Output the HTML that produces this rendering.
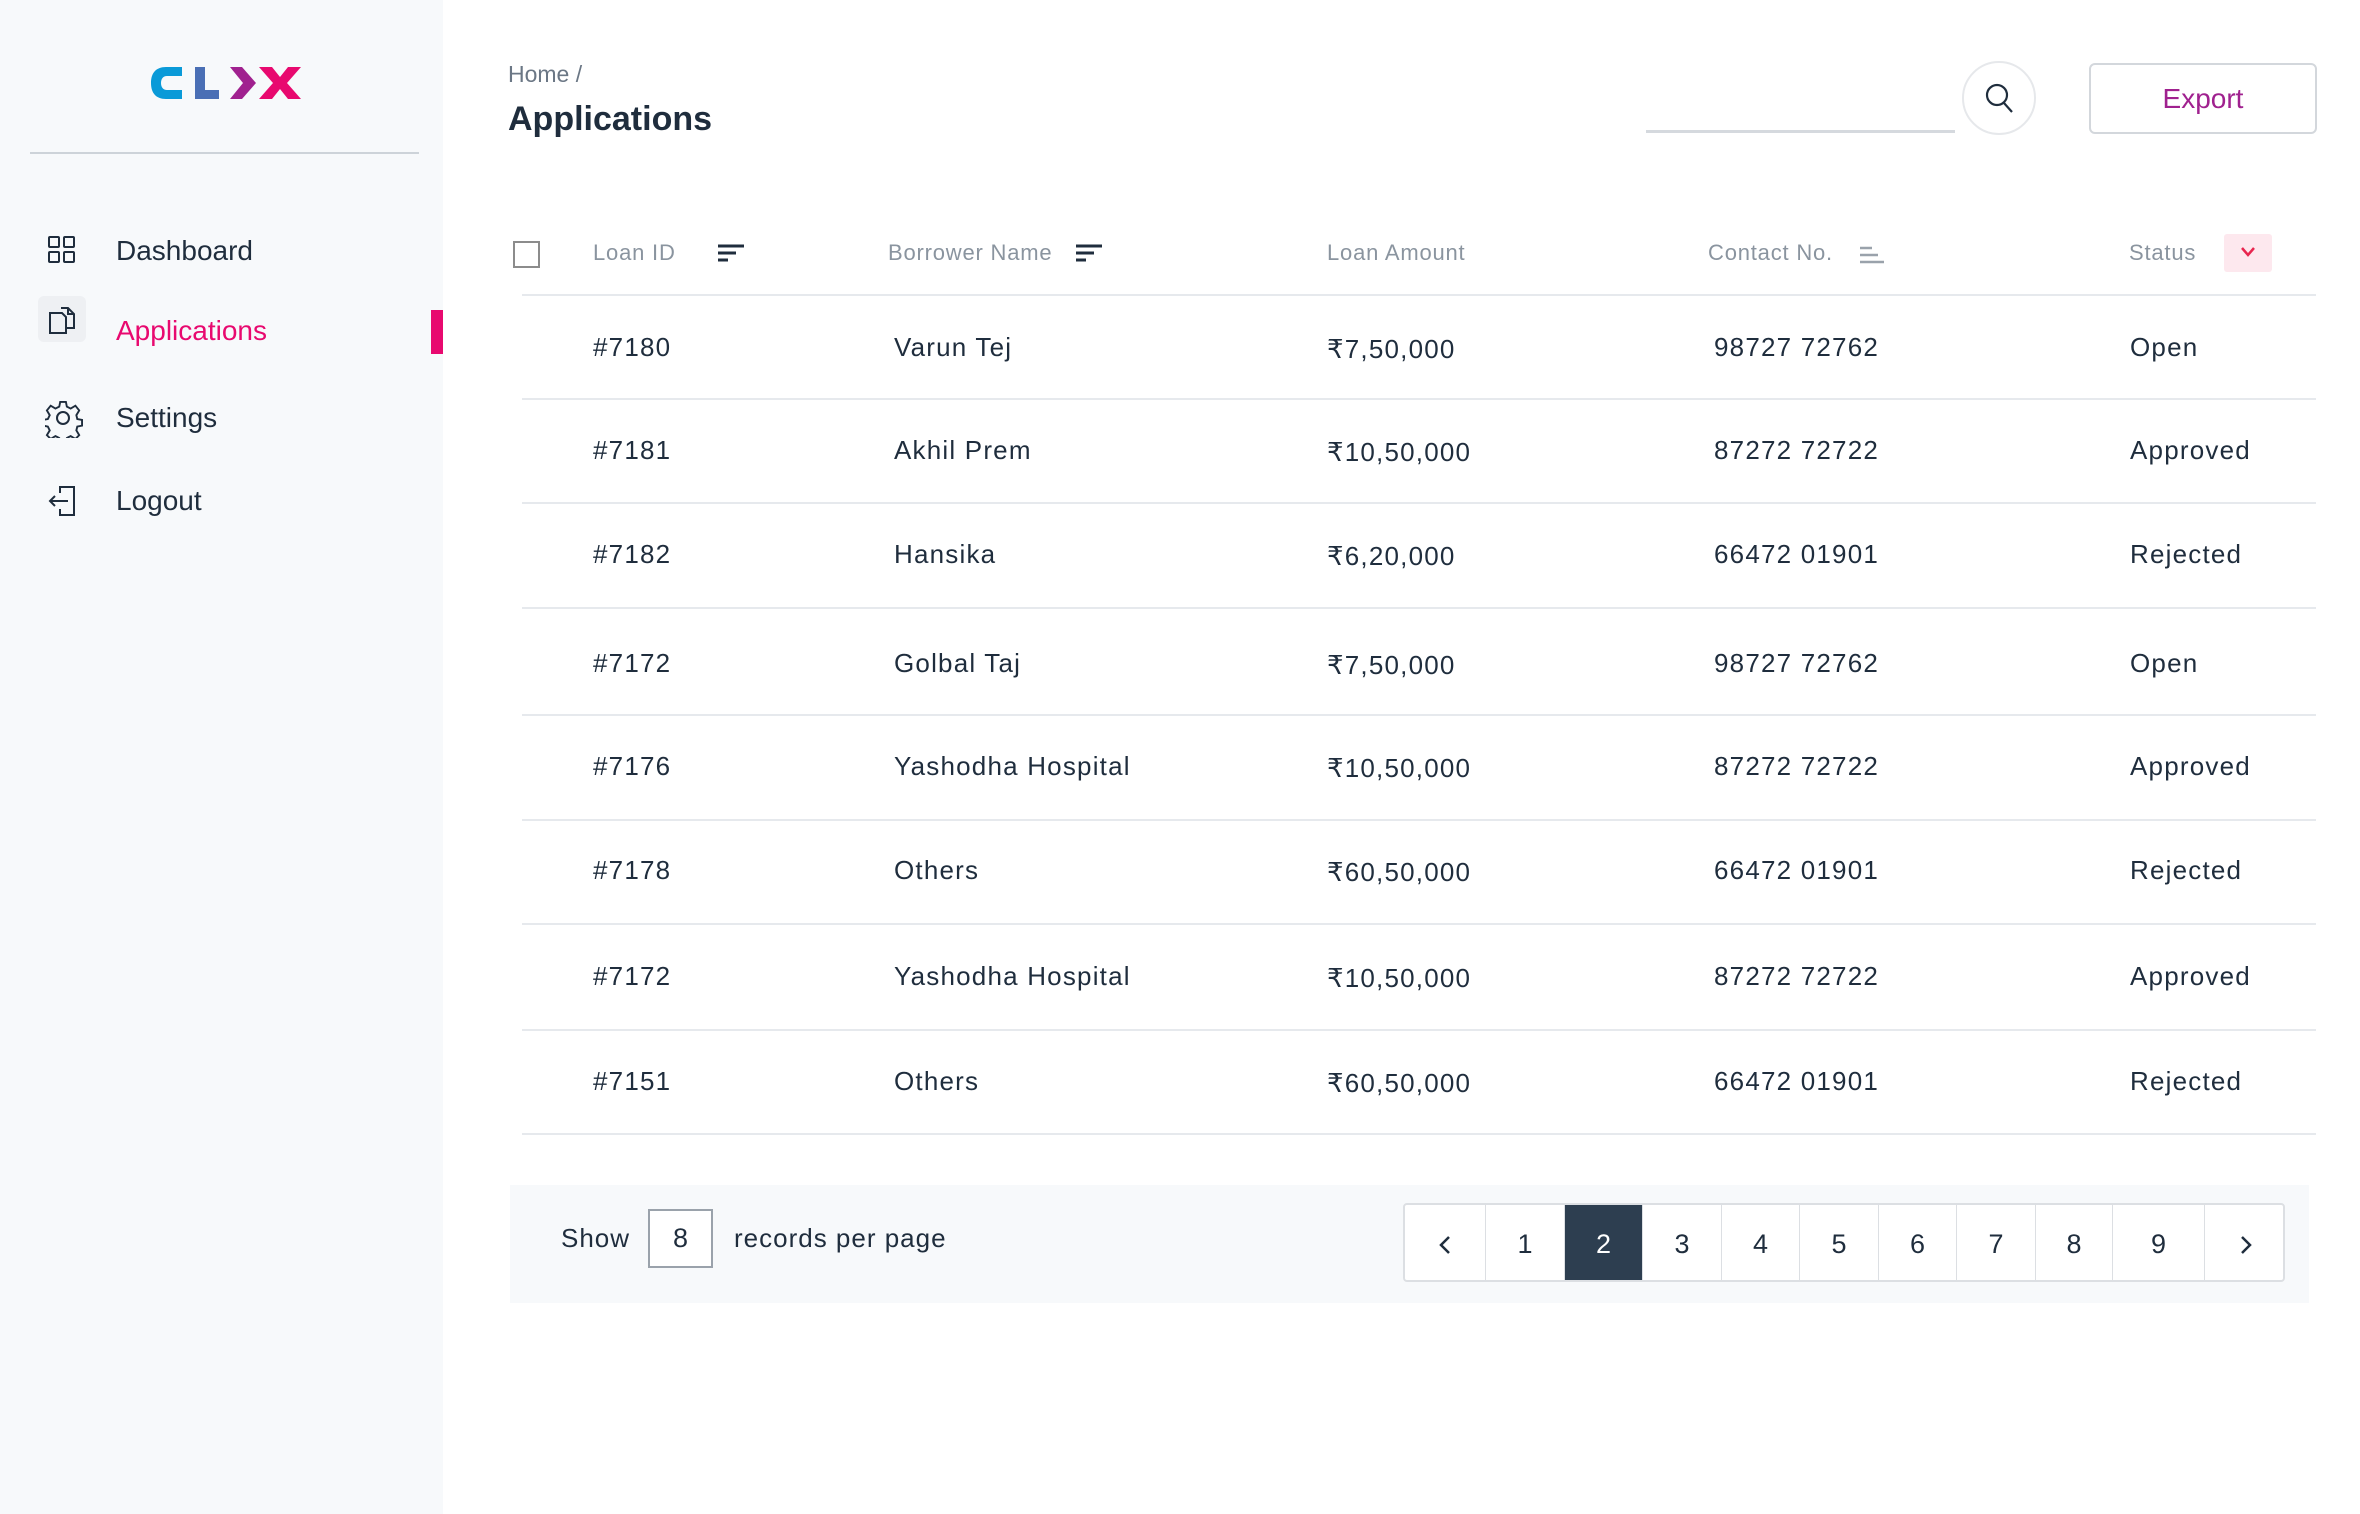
<!DOCTYPE html>
<html><head><meta charset="utf-8"><style>
*{margin:0;padding:0;box-sizing:border-box}
body{width:2360px;height:1514px;background:#fff;font-family:"Liberation Sans",sans-serif;color:#1f2d3d;position:relative;overflow:hidden}
.a{position:absolute;white-space:nowrap}
.side{position:absolute;left:0;top:0;width:443px;height:1514px;background:#f7f9fb}
.nav{font-size:28px;line-height:1}
.th{font-size:22px;color:#8a949f;letter-spacing:.8px;line-height:1}
.td{font-size:26px;letter-spacing:1.2px;line-height:1;color:#1f2d3d}
.ln{position:absolute;left:522px;width:1794px;height:2px;background:#e6e9ed}
.pg{position:absolute;top:0;height:79px;border-left:1px solid #dcdfe3;display:flex;align-items:center;justify-content:center;font-size:27px;color:#1f2d3d}
</style></head><body>
<div class="side"></div>
<svg class="a" style="left:148px;top:63px" width="156" height="40" viewBox="0 0 156 40">
<path d="M34 4H18C8 4 3 10 3 20s5 16 15 16h16V27H19c-4 0-6-3-6-7s2-7 6-7h15z" fill="#0a9ad8"/>
<path d="M47 4h10v23h14v9H47z" fill="#4a6fb5"/>
<path d="M82 4h12l14 16-14 16H82l13-16z" fill="#a0218f"/>
<path d="M111 4h13l8 10 8-10h13l-14 16 14 16h-13l-8-10-8 10h-13l14-16z" fill="#e8096f"/>
</svg>
<div class="a" style="left:30px;top:152px;width:389px;height:2px;background:#cdd3d9"></div>
<svg class="a" style="left:47px;top:235px" width="30" height="30" viewBox="0 0 30 30" fill="none" stroke="#1f2d3d" stroke-width="2"><rect x="2" y="2" width="10" height="10" rx="1"/><rect x="17" y="2" width="10" height="10" rx="1"/><rect x="2" y="17" width="10" height="10" rx="1"/><rect x="17" y="17" width="10" height="10" rx="1"/></svg>
<div class="a nav" style="left:116px;top:237px">Dashboard</div>
<div class="a" style="left:38px;top:296px;width:48px;height:46px;background:#eef0f3;border-radius:6px"></div>
<svg class="a" style="left:47px;top:305px" width="30" height="30" viewBox="0 0 30 30" fill="none" stroke="#1f2d3d" stroke-width="2"><path d="M3 8h12l4 4v16H3z"/><path d="M14 3h7l6 6v14h-8"/><path d="M21 3v6h6"/></svg>
<div class="a nav" style="left:116px;top:317px;color:#e8096f">Applications</div>
<div class="a" style="left:431px;top:310px;width:12px;height:44px;background:#e8096f"></div>
<svg class="a" style="left:45px;top:400px" width="38" height="38" viewBox="0 0 38 38" fill="none" stroke="#1f2d3d" stroke-width="2"><path d="M16 2h6l1 5 4 2 5-3 4 5-3 5 1 4 5 1v6l-5 1-1 4 3 5-4 4-5-3-4 2-1 5h-6l-1-5-4-2-5 3-4-4 3-5-2-4-5-1v-6l5-1 2-4-3-5 4-5 5 3 4-2z" transform="scale(.95)"/><circle cx="18" cy="18" r="6"/></svg>
<div class="a nav" style="left:116px;top:404px">Settings</div>
<svg class="a" style="left:47px;top:484px" width="32" height="34" viewBox="0 0 32 34" fill="none" stroke="#1f2d3d" stroke-width="2"><path d="M13 9V3h14v28H13v-6"/><path d="M21 17H3m5-5l-5 5 5 5"/></svg>
<div class="a nav" style="left:116px;top:487px">Logout</div>

<div class="a" style="left:508px;top:61px;font-size:23px;color:#6b7785">Home /</div>
<div class="a" style="left:508px;top:100px;font-size:34px;font-weight:bold;color:#1f2d3d">Applications</div>
<div class="a" style="left:1646px;top:130px;width:309px;height:3px;background:#d5d9de"></div>
<div class="a" style="left:1962px;top:61px;width:74px;height:74px;border-radius:50%;border:2px solid #e6e8eb;background:#fff"></div>
<svg class="a" style="left:1984px;top:82px" width="32" height="32" viewBox="0 0 32 32" fill="none" stroke="#1f2d3d" stroke-width="2.2"><circle cx="13" cy="13" r="10"/><path d="M20 21l8 9"/></svg>
<div class="a" style="left:2089px;top:63px;width:228px;height:71px;border:2px solid #d3d7dc;border-radius:6px;display:flex;align-items:center;justify-content:center;font-size:28px;color:#a0218f">Export</div>

<div class="a" style="left:513px;top:241px;width:27px;height:27px;border:2px solid #8c8c8c"></div>
<div class="a th" style="left:593px;top:242px">Loan ID</div>
<svg class="a" style="left:718px;top:244px" width="26" height="20"><path d="M0 2h26M0 9h18M0 16h10" stroke="#1f2d3d" stroke-width="3"/></svg>
<div class="a th" style="left:888px;top:242px">Borrower Name</div>
<svg class="a" style="left:1076px;top:244px" width="26" height="20"><path d="M0 2h26M0 9h18M0 16h10" stroke="#1f2d3d" stroke-width="3"/></svg>
<div class="a th" style="left:1327px;top:242px">Loan Amount</div>
<div class="a th" style="left:1708px;top:242px">Contact No.</div>
<svg class="a" style="left:1860px;top:246px" width="24" height="18"><path d="M0 2h12M0 9h18M0 16h24" stroke="#9aa2ab" stroke-width="2.5"/></svg>
<div class="a th" style="left:2129px;top:242px">Status</div>
<div class="a" style="left:2224px;top:234px;width:48px;height:38px;background:#fde8ee;border-radius:3px"></div>
<svg class="a" style="left:2240px;top:246px" width="16" height="12"><path d="M2 2l6 7 6-7" fill="none" stroke="#e8264f" stroke-width="2.5"/></svg>

<div class="ln" style="top:294px"></div><div class="ln" style="top:398px"></div><div class="ln" style="top:502px"></div><div class="ln" style="top:607px"></div><div class="ln" style="top:714px"></div><div class="ln" style="top:819px"></div><div class="ln" style="top:923px"></div><div class="ln" style="top:1029px"></div><div class="ln" style="top:1133px"></div>

<div class="a td" style="left:593px;top:334px">#7180</div><div class="a td" style="left:894px;top:334px">Varun Tej</div><div class="a td" style="left:1327px;top:336px">₹7,50,000</div><div class="a td" style="left:1714px;top:334px">98727 72762</div><div class="a td" style="left:2130px;top:334px">Open</div>
<div class="a td" style="left:593px;top:437px">#7181</div><div class="a td" style="left:894px;top:437px">Akhil Prem</div><div class="a td" style="left:1327px;top:439px">₹10,50,000</div><div class="a td" style="left:1714px;top:437px">87272 72722</div><div class="a td" style="left:2130px;top:437px">Approved</div>
<div class="a td" style="left:593px;top:541px">#7182</div><div class="a td" style="left:894px;top:541px">Hansika</div><div class="a td" style="left:1327px;top:543px">₹6,20,000</div><div class="a td" style="left:1714px;top:541px">66472 01901</div><div class="a td" style="left:2130px;top:541px">Rejected</div>
<div class="a td" style="left:593px;top:650px">#7172</div><div class="a td" style="left:894px;top:650px">Golbal Taj</div><div class="a td" style="left:1327px;top:652px">₹7,50,000</div><div class="a td" style="left:1714px;top:650px">98727 72762</div><div class="a td" style="left:2130px;top:650px">Open</div>
<div class="a td" style="left:593px;top:753px">#7176</div><div class="a td" style="left:894px;top:753px">Yashodha Hospital</div><div class="a td" style="left:1327px;top:755px">₹10,50,000</div><div class="a td" style="left:1714px;top:753px">87272 72722</div><div class="a td" style="left:2130px;top:753px">Approved</div>
<div class="a td" style="left:593px;top:857px">#7178</div><div class="a td" style="left:894px;top:857px">Others</div><div class="a td" style="left:1327px;top:859px">₹60,50,000</div><div class="a td" style="left:1714px;top:857px">66472 01901</div><div class="a td" style="left:2130px;top:857px">Rejected</div>
<div class="a td" style="left:593px;top:963px">#7172</div><div class="a td" style="left:894px;top:963px">Yashodha Hospital</div><div class="a td" style="left:1327px;top:965px">₹10,50,000</div><div class="a td" style="left:1714px;top:963px">87272 72722</div><div class="a td" style="left:2130px;top:963px">Approved</div>
<div class="a td" style="left:593px;top:1068px">#7151</div><div class="a td" style="left:894px;top:1068px">Others</div><div class="a td" style="left:1327px;top:1070px">₹60,50,000</div><div class="a td" style="left:1714px;top:1068px">66472 01901</div><div class="a td" style="left:2130px;top:1068px">Rejected</div>

<div class="a" style="left:510px;top:1185px;width:1799px;height:118px;background:#f7f9fb"></div>
<div class="a td" style="left:561px;top:1225px;letter-spacing:1px">Show</div>
<div class="a" style="left:648px;top:1209px;width:65px;height:59px;background:#fff;border:2px solid #9aa2ab;display:flex;align-items:center;justify-content:center;font-size:27px">8</div>
<div class="a td" style="left:734px;top:1225px;letter-spacing:1px">records per page</div>
<div class="a" style="left:1403px;top:1203px;width:882px;height:79px;background:#fff;border:2px solid #dcdfe3;border-radius:4px;overflow:hidden">
<div class="pg" style="left:0;width:80px;border-left:none"><svg width="14" height="20"><path d="M11 2L3 10l8 8" fill="none" stroke="#1f2d3d" stroke-width="2.5"/></svg></div>
<div class="pg" style="left:80px;width:79px">1</div>
<div class="pg" style="left:159px;width:78px;background:#2d3e50;color:#fff">2</div>
<div class="pg" style="left:237px;width:79px">3</div>
<div class="pg" style="left:316px;width:78px">4</div>
<div class="pg" style="left:394px;width:79px">5</div>
<div class="pg" style="left:473px;width:78px">6</div>
<div class="pg" style="left:551px;width:79px">7</div>
<div class="pg" style="left:630px;width:77px">8</div>
<div class="pg" style="left:707px;width:92px">9</div>
<div class="pg" style="left:799px;width:82px"><svg width="14" height="20"><path d="M3 2l8 8-8 8" fill="none" stroke="#1f2d3d" stroke-width="2.5"/></svg></div>
</div>
</body></html>
